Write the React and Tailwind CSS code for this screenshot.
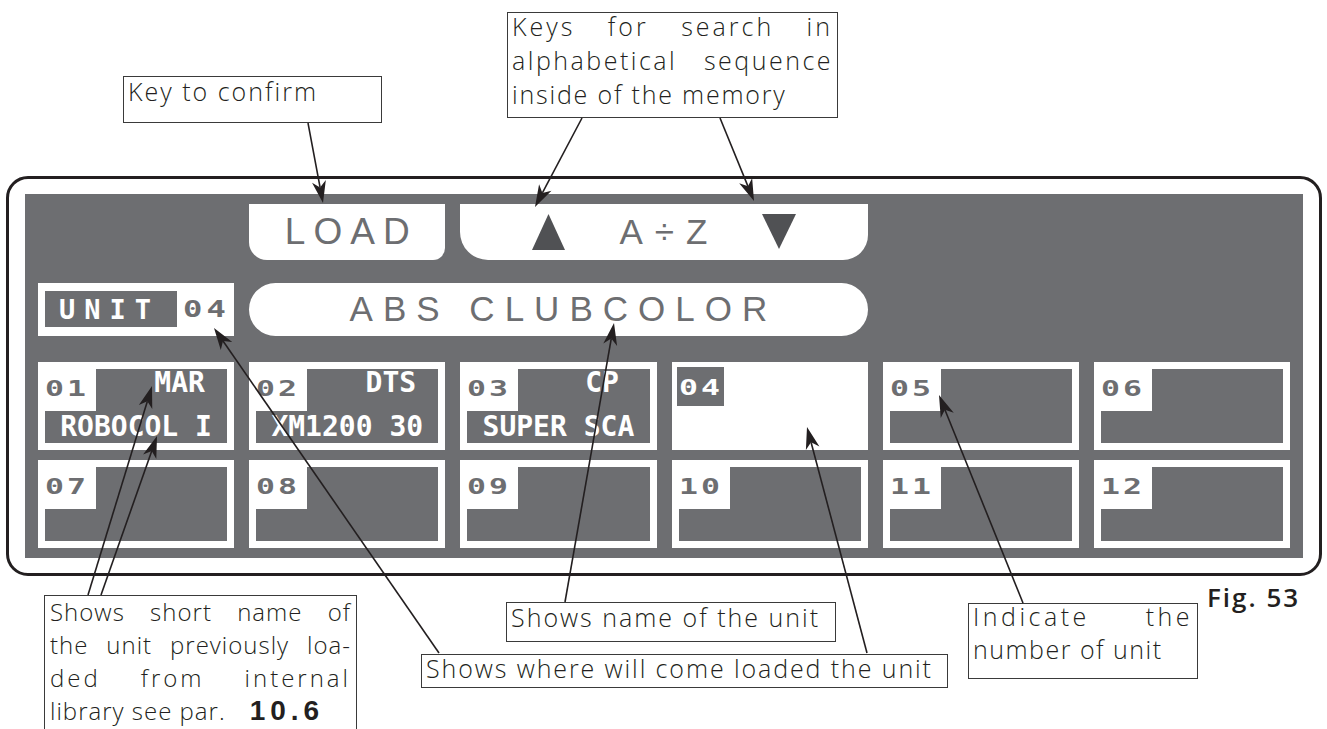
import React from "react";

const lcd = "font-['DejaVu_Sans_Mono',monospace] font-bold";

const units = [
  { n: "01", code: "MAR", name: "ROBOCOL I" },
  { n: "02", code: "DTS", name: "XM1200 30" },
  { n: "03", code: "CP", name: "SUPER SCA" },
  { n: "04", selected: true },
  { n: "05" },
  { n: "06" },
  { n: "07" },
  { n: "08" },
  { n: "09" },
  { n: "10" },
  { n: "11" },
  { n: "12" },
];

// callout leader lines: from box edge to arrow tip
const arrows = [
  [308, 123, 323, 203],
  [582, 118, 535, 207],
  [720, 118, 754, 201],
  [88, 595, 152, 386],
  [101, 595, 157, 436],
  [565, 602, 614, 323],
  [439, 653, 214, 328],
  [867, 653, 807, 427],
  [1023, 603, 939, 395],
];

function Arrow({ a }) {
  const [x1, y1, x2, y2] = a;
  const dx = x2 - x1;
  const dy = y2 - y1;
  const len = Math.hypot(dx, dy);
  const ux = dx / len;
  const uy = dy / len;
  const L = 22;
  const W = 7;
  const bx = x2 - ux * L;
  const by = y2 - uy * L;
  const nx = x2 - ux * L * 0.72;
  const ny = y2 - uy * L * 0.72;
  const px = -uy * W;
  const py = ux * W;
  return (
    <g>
      <line x1={x1} y1={y1} x2={nx} y2={ny} stroke="#231f20" strokeWidth="1.6" />
      <polygon
        points={`${x2},${y2} ${bx + px},${by + py} ${nx},${ny} ${bx - px},${by - py}`}
        fill="#231f20"
      />
    </g>
  );
}

function Num({ children, light }) {
  return (
    <span
      className={`inline-block origin-left scale-x-150 ${lcd} text-[21px] leading-[21px] tracking-[2px] ${
        light ? "text-white" : "text-[#6d6e71]"
      }`}
    >
      {children}
    </span>
  );
}

function Cell({ u }) {
  if (u.selected) {
    return (
      <div className="h-[88px] bg-white p-[5px]">
        <div className="w-[47px] h-[39px] bg-[#6d6e71] pl-[2px] pt-[10px]">
          <Num light>{u.n}</Num>
        </div>
      </div>
    );
  }
  return (
    <div className="h-[88px] border-[7px] border-white flex flex-col">
      <div className="flex h-[42px]">
        <div className="w-[51px] bg-white pt-[9px]">
          <Num>{u.n}</Num>
        </div>
        <div className="flex-1 flex justify-end">
          <div className={`w-[95px] text-center ${lcd} text-[28px] leading-[28px] text-white`}>
            {u.code}
          </div>
        </div>
      </div>
      <div className={`flex-1 text-center ${lcd} text-[28px] leading-[32px] text-white whitespace-pre`}>
        {u.name}
      </div>
    </div>
  );
}

export default function App() {
  return (
    <div className="relative w-[1327px] h-[729px] overflow-hidden bg-white pt-[176px] pl-[6px] font-['Open_Sans',sans-serif] font-light text-[#231f20]">
      {/* display panel */}
      <div className="w-[1316px] h-[400px] border-[3px] border-[#231f20] rounded-[22px] pt-[15px] pb-[15px] px-[16px]">
        <div className="h-[364px] bg-[#6d6e71] px-[13px] pt-[10px] flex flex-col">
          <div className="grid grid-cols-6 gap-x-[15px] h-[49px] font-['Liberation_Sans',sans-serif] font-normal text-[#6d6e71]">
            <div className="col-start-2 bg-white rounded-bl-[18px] rounded-br-[12px] flex items-center justify-center pl-[8px] text-[37px] tracking-[8px]">
              LOAD
            </div>
            <div className="col-span-2 bg-white rounded-bl-[28px] rounded-br-[25px] flex items-center justify-center gap-[55px]">
              <svg width="33" height="36" viewBox="0 0 33 36">
                <polygon points="16.5,0 33,36 0,36" fill="#505154" />
              </svg>
              <div className="flex items-center gap-[12px] text-[35px] leading-none">
                <span>A</span>
                <span>÷</span>
                <span>Z</span>
              </div>
              <svg width="34" height="35" viewBox="0 0 34 35">
                <polygon points="0,0 34,0 17,35" fill="#505154" />
              </svg>
            </div>
          </div>

          <div className="grid grid-cols-6 gap-x-[15px] h-[49px] mt-[30px]">
            <div className="bg-white flex items-center pl-[7px]">
              <div className={`w-[132px] h-[36px] bg-[#6d6e71] flex items-center pl-[14px] ${lcd} text-[27px] leading-[27px] tracking-[9px] text-white`}>
                UNIT
              </div>
              <span className={`ml-[6px] inline-block origin-left scale-x-[1.4] ${lcd} text-[23px] leading-[23px] tracking-[3px] text-[#6d6e71]`}>
                04
              </span>
            </div>
            <div className="col-span-3 bg-white rounded-full flex items-center justify-center pl-[10px] font-['Liberation_Sans',sans-serif] font-normal text-[35px] tracking-[10px] text-[#6d6e71]">
              ABS CLUBCOLOR
            </div>
          </div>

          <div className="grid grid-cols-6 gap-x-[15px] gap-y-[10px] mt-[30px]">
            {units.map((u) => (
              <Cell key={u.n} u={u} />
            ))}
          </div>
        </div>
      </div>

      {/* callouts */}
      <div className="absolute left-[123px] top-[76px] w-[259px] h-[47px] border border-[#3a3a3a] bg-white px-[4px] text-[25px] leading-[34px]">
        <div className="-mt-[3px] tracking-[2px]">Key to confirm</div>
      </div>

      <div className="absolute left-[507px] top-[12px] w-[331px] h-[106px] border border-[#3a3a3a] bg-white px-[4px] text-[25px] leading-[34px]">
        <div className="-mt-[4px]">
          <div className="text-justify [text-align-last:justify] tracking-[3px]">Keys for search in</div>
          <div className="text-justify [text-align-last:justify] tracking-[2.5px]">alphabetical sequence</div>
          <div className="tracking-[1.8px]">inside of the memory</div>
        </div>
      </div>

      <div className="absolute left-[44px] top-[595px] w-[313px] h-[150px] border border-[#3a3a3a] bg-white px-[5px] text-[24px] leading-[33px]">
        <div className="-mt-[1px]">
          <div className="text-justify [text-align-last:justify] tracking-[1px]">Shows short name of</div>
          <div className="text-justify [text-align-last:justify] tracking-[1px]">the unit previously loa-</div>
          <div className="text-justify [text-align-last:justify] tracking-[3px]">ded from internal</div>
          <div className="tracking-[1px] whitespace-nowrap">
            library see par.
            <span className="ml-[24px] font-['Liberation_Sans',sans-serif] text-[28px] leading-none font-bold tracking-[5px]">
              10.6
            </span>
          </div>
        </div>
      </div>

      <div className="absolute left-[506px] top-[602px] w-[330px] h-[40px] border border-[#3a3a3a] bg-white px-[4px] text-[25px] leading-[34px]">
        <div className="-mt-[3px] tracking-[2px]">Shows name of the unit</div>
      </div>

      <div className="absolute left-[421px] top-[654px] w-[527px] h-[34px] border border-[#3a3a3a] bg-white px-[4px] text-[25px] leading-[34px]">
        <div className="-mt-[4px] tracking-[1.9px] whitespace-nowrap">Shows where will come loaded the unit</div>
      </div>

      <div className="absolute left-[968px] top-[603px] w-[230px] h-[76px] border border-[#3a3a3a] bg-white px-[4px] text-[25px] leading-[33px]">
        <div className="-mt-[4px]">
          <div className="text-justify [text-align-last:justify] tracking-[3.5px]">Indicate the</div>
          <div className="tracking-[1.5px]">number of unit</div>
        </div>
      </div>

      <div className="absolute left-[1207px] top-[584px] text-[26px] leading-[26px] font-semibold tracking-[2px]">
        Fig. 53
      </div>

      <svg className="absolute inset-0 pointer-events-none" width="1327" height="729" viewBox="0 0 1327 729">
        {arrows.map((a, i) => (
          <Arrow key={i} a={a} />
        ))}
      </svg>
    </div>
  );
}
